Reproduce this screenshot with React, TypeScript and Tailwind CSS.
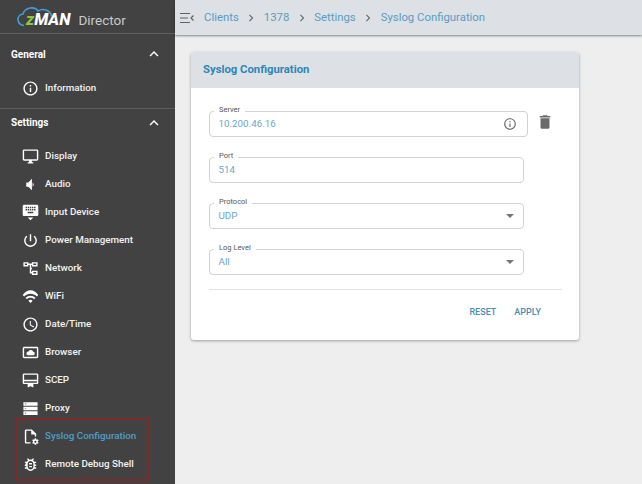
import type { ReactNode } from 'react';

const icons: Record<string, ReactNode> = {
  info: <path d="M11 7h2v2h-2zm0 4h2v6h-2zm1-9C6.48 2 2 6.48 2 12s4.48 10 10 10 10-4.48 10-10S17.52 2 12 2zm0 18c-4.41 0-8-3.59-8-8s3.59-8 8-8 8 3.59 8 8-3.59 8-8 8z" />,
  display: <path d="M21 2H3c-1.1 0-2 .9-2 2v12c0 1.1.9 2 2 2h7v2H8v2h8v-2h-2v-2h7c1.1 0 2-.9 2-2V4c0-1.1-.9-2-2-2zm0 14H3V4h18v12z" />,
  audio: <path d="M6 9v6h3l5 5V4L9 9H6zm10.5 3c0-1.3-.7-2.4-1.5-3v6c.8-.6 1.5-1.7 1.5-3z" />,
  keyboard: <path d="M21 1H3c-1.1 0-2 .9-2 2v12c0 1.1.9 2 2 2h18c1.1 0 2-.9 2-2V3c0-1.1-.9-2-2-2zM11 4h2v2h-2V4zm0 3h2v2h-2V7zM8 4h2v2H8V4zm0 3h2v2H8V7zM5 4h2v2H5V4zm0 3h2v2H5V7zm11 6H8v-2h8v2zm0-4h-2V7h2v2zm0-3h-2V4h2v2zm3 3h-2V7h2v2zm0-3h-2V4h2v2zM12 23l4-4H8l4 4z" />,
  power: <path d="M13 3h-2v10h2V3zm4.83 2.17l-1.42 1.42C17.99 7.86 19 9.81 19 12c0 3.87-3.13 7-7 7s-7-3.13-7-7c0-2.19 1.01-4.14 2.58-5.42L6.17 5.17C4.23 6.82 3 9.26 3 12c0 4.97 4.03 9 9 9s9-4.03 9-9c0-2.74-1.23-5.18-3.17-6.83z" />,
  network: <path d="M2 3h7v6H2V3zm2 2v2h3V5H4zm10-2h8v6h-8V3zm2 2v2h4V5h-4zm-2 10h8v6h-8v-6zm2 2v2h4v-2h-4zM9 5h5v2h-1v10h1v2h-3V7H9V5zm2 6h3v2h-3v-2z" />,
  wifi: <path d="M1 9l2 2c5-5 13-5 18 0l2-2C17-.3 7-.3 1 9zm8 8l3 3 3-3c-1.7-1.7-4.3-1.7-6 0zm-4-4l2 2c2.800-2.800 7.200-2.800 10 0l2-2c-3.900-3.900-10.100-3.900-14 0z" transform="translate(0 1)" />,
  clock: <path d="M11.99 2C6.47 2 2 6.48 2 12s4.47 10 9.990 10C17.520 22 22 17.520 22 12S17.520 2 11.990 2zM12 20c-4.420 0-8-3.580-8-8s3.580-8 8-8 8 3.580 8 8-3.580 8-8 8zm.5-13H11v6l5.250 3.150.75-1.230-4.500-2.670z" />,
  browser: <path d="M21 4H3c-1.100 0-2 .9-2 2v12c0 1.100.9 2 2 2h18c1.100 0 2-.9 2-2V6c0-1.100-.9-2-2-2zm0 14H3V6h18v12zM8.500 16h7a2.500 2.500 0 0 0 .4-4.970A3.500 3.500 0 0 0 12.500 8.500a3.500 3.500 0 0 0-3.200 2.100A2.700 2.700 0 0 0 8.500 16z" />,
  scep: <path d="M21 2H3c-1.100 0-2 .9-2 2v11c0 1.100.9 2 2 2h5v5l4-2 4 2v-5h5c1.100 0 2-.9 2-2V4c0-1.100-.9-2-2-2zm0 13H3v-2h18v2zm0-4H3V4h18v7z" />,
  proxy: <path fillRule="evenodd" d="M2 3h20v5H2V3zm0 6.500h20v5H2v-5zM2 16h20v5H2v-5zM4 5v1h2V5H4zm0 6.500v1h2v-1H4zM4 18v1h2v-1H4z" />,
  syslog: <path d="M6 2c-1.100 0-2 .9-2 2v16c0 1.100.9 2 2 2h6v-2H6V4h7v5h5v3h2V8l-6-6H6zm12 12.500-.35 1.500c-.3.1-.6.25-.85.45l-1.450-.45-.9 1.550 1.100 1.050a3 3 0 0 0 0 1l-1.100 1.050.9 1.550 1.450-.45c.25.2.55.35.85.45l.35 1.500h1.800l.35-1.500c.3-.1.6-.25.85-.45l1.450.45.9-1.550-1.100-1.050a3 3 0 0 0 0-1l1.100-1.050-.9-1.550-1.450.45c-.25-.2-.55-.35-.85-.45L19.800 14.500H18zm.9 3.500a1.500 1.500 0 1 1 0 3 1.500 1.500 0 0 1 0-3z" />,
  bug: <path d="M20 8h-2.810c-.45-.78-1.070-1.450-1.820-1.960L17 4.410 15.590 3l-2.170 2.170C12.960 5.060 12.490 5 12 5s-.96.06-1.410.17L8.410 3 7 4.410l1.620 1.630C7.880 6.550 7.260 7.220 6.810 8H4v2h2.090c-.5.330-.9.660-.9 1v1H4v2h2v1c0 .34.040.67.090 1H4v2h2.810c1.040 1.790 2.970 3 5.190 3s4.150-1.210 5.190-3H20v-2h-2.090c.05-.33.090-.66.090-1v-1h2v-2h-2v-1c0-.34-.04-.67-.09-1H20V8zm-4 7c0 2.210-1.790 4-4 4s-4-1.790-4-4v-4c0-2.210 1.790-4 4-4s4 1.790 4 4v4zm-6-1h4v2h-4v-2zm0-4h4v2h-4v-2z" />,
};

function Icon({ name, size = 18, className = '' }: { name: string; size?: number; className?: string }) {
  return (
    <svg width={size} height={size} viewBox="0 0 24 24" fill="currentColor" className={className}>
      {icons[name]}
    </svg>
  );
}

function ChevronUp() {
  return (
    <svg width="18" height="18" viewBox="0 0 24 24" fill="currentColor">
      <path d="M12 8l-6 6 1.410 1.410L12 10.830l4.590 4.580L18 14z" />
    </svg>
  );
}

function NavItem({ icon, label, active }: { icon: string; label: string; active?: boolean }) {
  return (
    <div className="flex h-7 items-center pl-[22px]">
      <div className="flex w-[23px] justify-start text-white">
        <Icon name={icon} size={17} />
      </div>
      <span className={`text-[9.8px] font-medium ${active ? 'text-[#4a9fd0]' : 'text-[#f2f2f2]'}`}>{label}</span>
    </div>
  );
}

function Field({ label, value, width, children }: { label: string; value: string; width: string; children?: ReactNode }) {
  return (
    <div className={`relative flex h-[26px] items-center justify-between rounded border border-[#d2d2d2] pl-[8.5px] pr-[10px] ${width}`}>
      <span className="absolute -top-[8px] left-[4px] bg-white px-[5px] text-[7.5px] leading-[12px] text-[#555]">{label}</span>
      <span className="mt-[1px] text-[9.8px] text-[#6aa6cd]">{value}</span>
      {children}
    </div>
  );
}

function Caret() {
  return (
    <svg width="8" height="4" viewBox="0 0 10 5" fill="#757575" className="-mr-[1px]">
      <path d="M0 0h10L5 5z" />
    </svg>
  );
}

function Crumb({ label }: { label: string }) {
  return <span className="text-[11.35px] font-normal text-[#5a9cc4]">{label}</span>;
}

function Sep() {
  return (
    <svg width="14" height="14" viewBox="0 0 24 24" fill="#6b6b6b" className="mx-[5.5px]">
      <path d="M10 6L8.590 7.410 13.170 12l-4.580 4.590L10 18l6-6z" />
    </svg>
  );
}

export default function App() {
  return (
    <div className="relative flex h-[484px] w-[642px] overflow-hidden bg-[#eeeeee] font-['Roboto',sans-serif]">
      {/* Sidebar */}
      <aside className="flex w-[175px] shrink-0 flex-col bg-[#424242]">
        <div className="relative flex h-[34px] items-center border-b border-[#5e5e5e] pl-[26px]">
          <svg width="44" height="26" viewBox="0 0 44 26" fill="none" className="absolute left-[16px] top-[4px]">
            <path d="M8 21.500C1 21 -0.500 11 7 10C9 3 19 2 22 7C27 4 35 6 35.500 12.500" stroke="#3f9fd4" strokeWidth="1.600" />
          </svg>
          <span className="relative mt-[8px] text-[16.5px] font-extrabold italic leading-none text-white">
            <span className="text-[#8dc63f]">z</span>MAN
          </span>
          <span className="relative mt-[8px] ml-[8px] text-[13.5px] leading-none text-[#c9c9c9]">Director</span>
        </div>
        <div className="flex h-[40px] items-center justify-between pl-[11px] pr-[12px] text-white">
          <span className="text-[10px] font-bold">General</span>
          <ChevronUp />
        </div>
        <div className="mb-[6px]">
          <NavItem icon="info" label="Information" />
        </div>
        <div className="flex h-[28px] items-center justify-between border-t border-[#5e5e5e] pl-[11px] pr-[12px] text-white">
          <span className="text-[10px] font-bold">Settings</span>
          <ChevronUp />
        </div>
        <div className="pt-[6px]">
          <NavItem icon="display" label="Display" />
          <NavItem icon="audio" label="Audio" />
          <NavItem icon="keyboard" label="Input Device" />
          <NavItem icon="power" label="Power Management" />
          <NavItem icon="network" label="Network" />
          <NavItem icon="wifi" label="WiFi" />
          <NavItem icon="clock" label="Date/Time" />
          <NavItem icon="browser" label="Browser" />
          <NavItem icon="scep" label="SCEP" />
          <NavItem icon="proxy" label="Proxy" />
          <NavItem icon="syslog" label="Syslog Configuration" active />
          <NavItem icon="bug" label="Remote Debug Shell" />
        </div>
      </aside>

      {/* Main */}
      <main className="flex min-w-0 flex-1 flex-col">
        <header className="flex h-[35px] items-center bg-[#dde1e5] pl-[5px] shadow-[0_1px_2px_rgba(0,0,0,0.45)]">
          <svg width="14" height="14" viewBox="0 0 14 14" fill="none" stroke="#5f6368" strokeWidth="1.200" className="mr-[10px]">
            <path d="M0 2.500h10M0 7h8M0 11.500h10M13.500 4.500 11 7l2.500 2.500" />
          </svg>
          <Crumb label="Clients" />
          <Sep />
          <Crumb label="1378" />
          <Sep />
          <Crumb label="Settings" />
          <Sep />
          <Crumb label="Syslog Configuration" />
        </header>

        <section className="ml-[16px] mt-[17px] w-[388px] rounded-[3px] bg-white shadow-[0_1px_3px_rgba(0,0,0,0.35)]">
          <div className="flex h-[36px] items-center rounded-t-[3px] bg-[#dde1e5] pl-[12px]">
            <h2 className="text-[11.3px] font-bold text-[#2e86b5]">Syslog Configuration</h2>
          </div>
          <div className="pl-[18px] pr-[17px] pt-[23px]">
            <div className="flex items-center">
              <Field label="Server" value="10.200.46.16" width="w-[319px]">
                <Icon name="info" size={14} className="text-[#6b6b6b]" />
              </Field>
              <svg width="18" height="18" viewBox="0 0 24 24" fill="#6a6a6a" className="ml-[8px] -mt-[4px]">
                <path d="M6 19c0 1.100.9 2 2 2h8c1.100 0 2-.9 2-2V7H6v12zM19 4h-3.500l-1-1h-5l-1 1H5v2h14V4z" />
              </svg>
            </div>
            <div className="mt-[20px] flex flex-col gap-[20px]">
              <Field label="Port" value="514" width="w-[315px]" />
              <Field label="Protocol" value="UDP" width="w-[315px]">
                <Caret />
              </Field>
              <Field label="Log Level" value="All" width="w-[315px]">
                <Caret />
              </Field>
            </div>
            <div className="mt-[14px] border-t border-[#e4e4e4]" />
            <div className="flex h-[44px] items-center justify-end gap-[18px] pr-[21px] pt-[1px]">
              <span className="text-[9px] font-medium text-[#4a8db5]">RESET</span>
              <span className="text-[9px] font-medium text-[#4a8db5]">APPLY</span>
            </div>
            <div className="h-[6px]" />
          </div>
        </section>
      </main>

      {/* red annotation box drawn over the screenshot */}
      <div className="pointer-events-none absolute left-[16px] top-[418px] h-[63px] w-[134px] border-2 border-[#7e2a2a]" />
    </div>
  );
}
